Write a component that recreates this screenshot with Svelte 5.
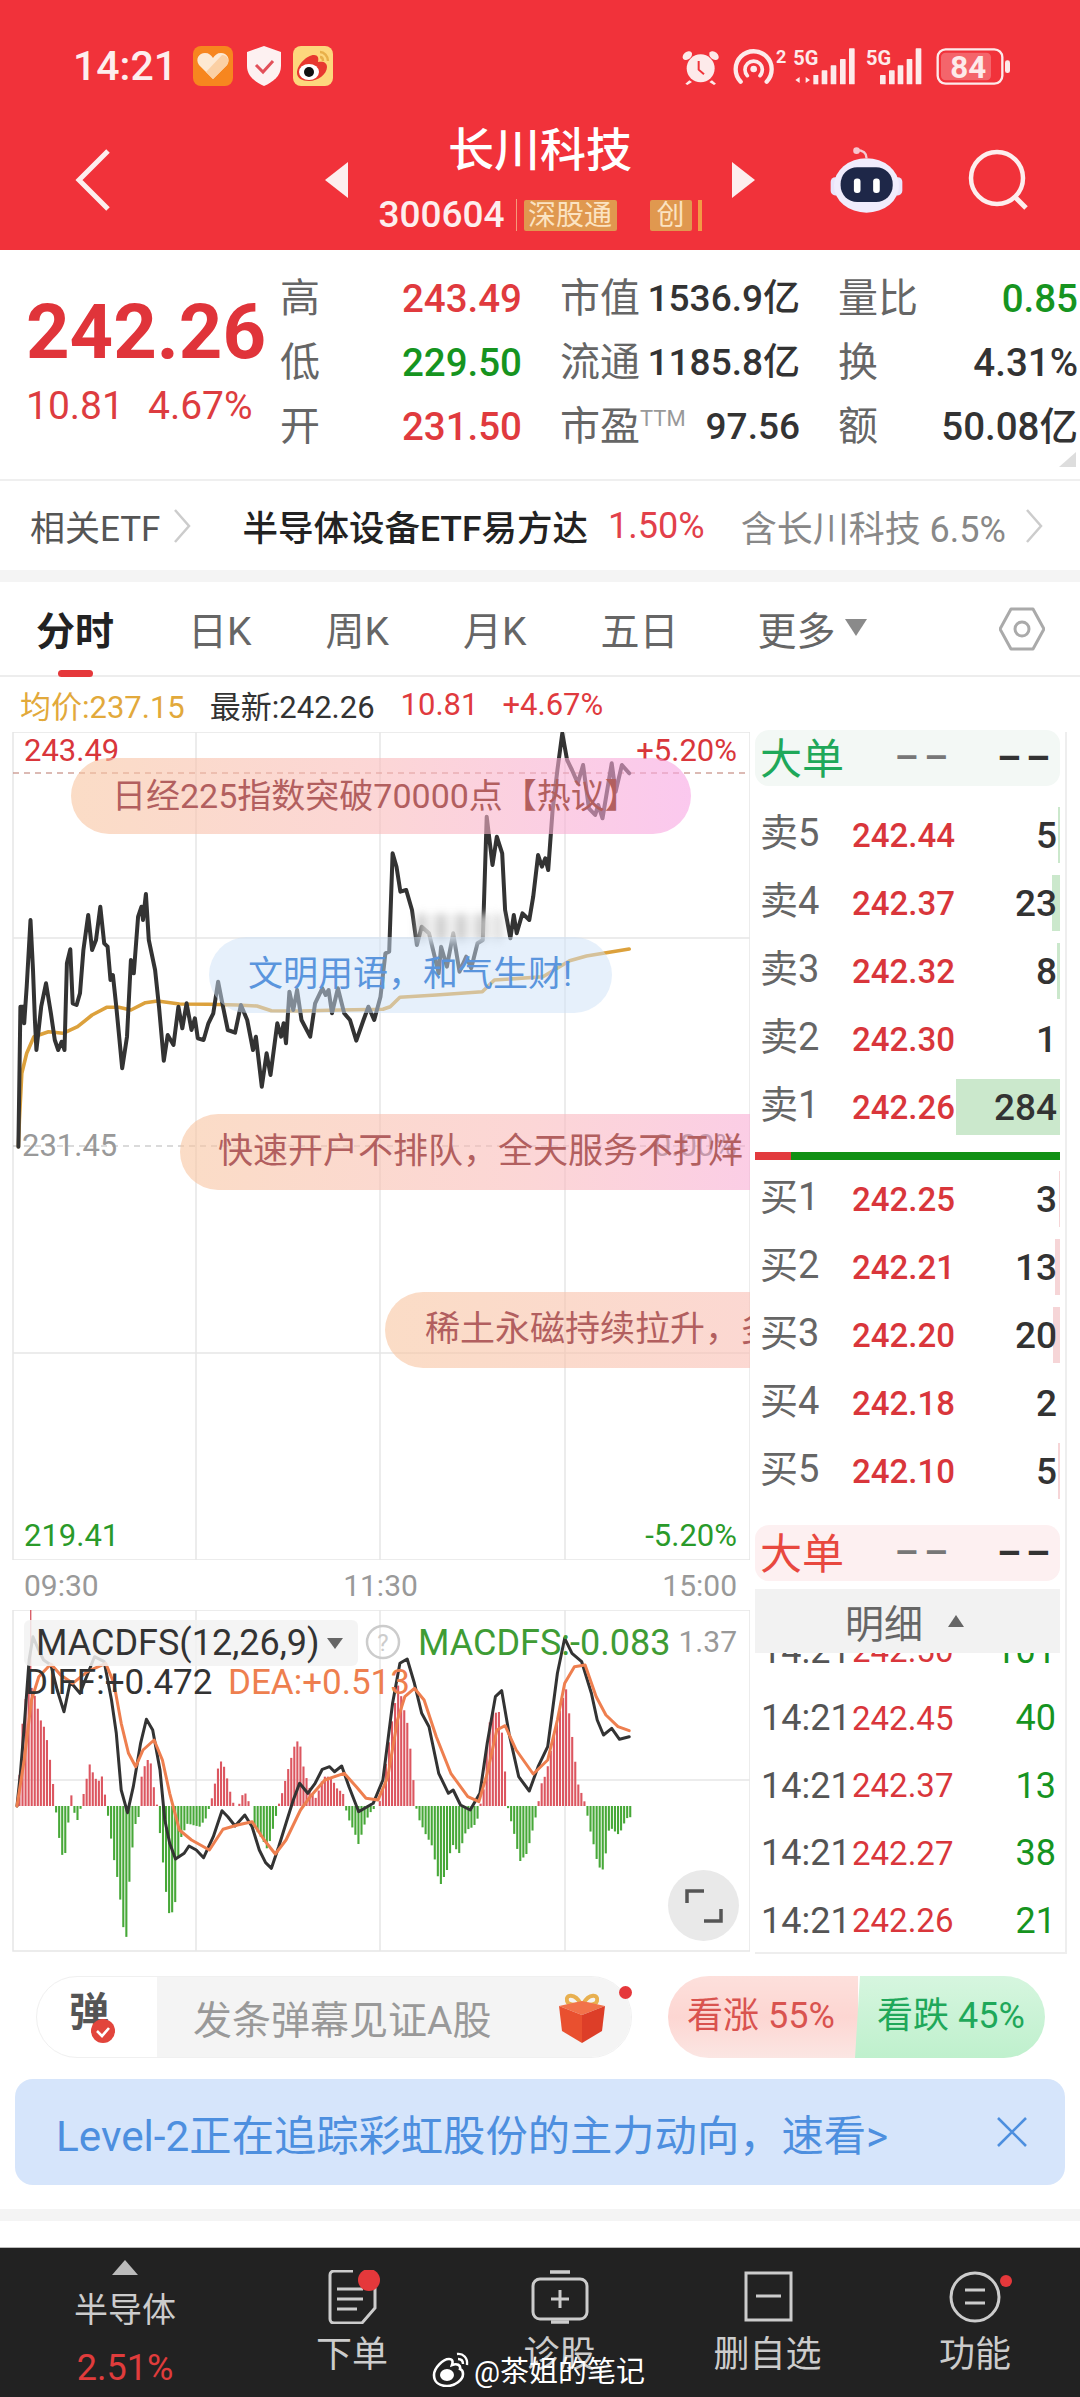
<script>
	// chart points are read off the reference in crop coordinates, mapped to pixels below
	const price = [[38,1280],[42,860],[48,860],[50,910],[55,800],[63,600],[68,750],[72,900],[75,990],[85,860],[95,790],[105,880],[113,960],[120,990],[127,965],[133,990],[138,730],[145,688],[150,850],[158,855],[165,820],[172,690],[182,585],[190,690],[198,660],[207,560],[215,670],[222,680],[228,780],[233,765],[240,860],[252,1045],[262,950],[270,720],[276,760],[285,590],[292,560],[295,600],[301,522],[307,660],[320,750],[328,860],[338,1022],[346,945],[358,975],[368,860],[376,925],[385,850],[395,930],[402,895],[408,955],[420,960],[430,910],[440,880],[450,785],[460,860],[470,930],[485,938],[497,855],[510,900],[522,990],[528,950],[540,1100],[550,1000],[558,1065],[572,910],[580,950],[585,910],[590,970],[597,815],[605,870],[613,810],[622,900],[640,950],[650,850],[665,805],[672,825],[678,810],[685,880],[697,805],[710,880],[722,900],[735,962],[750,900],[760,860],[772,900],[785,830],[795,700],[803,695],[810,400],[818,440],[826,515],[838,510],[850,570],[860,675],[870,620],[885,640],[905,760],[910,680],[922,740],[935,640],[948,755],[962,710],[972,745],[985,670],[996,660],[1004,290],[1016,435],[1025,350],[1036,400],[1042,570],[1053,655],[1060,585],[1066,640],[1078,580],[1092,600],[1100,530],[1110,405],[1118,440],[1125,415],[1131,450],[1140,270],[1150,150],[1160,40],[1170,120],[1180,150],[1192,190],[1203,135],[1215,265],[1228,285],[1234,255],[1243,295],[1262,130],[1270,215],[1283,135],[1298,160]];
	const avg = [[38,1280],[40,1200],[45,1060],[55,1000],[70,950],[100,935],[130,940],[160,920],[190,885],[220,862],[245,862],[270,870],[300,848],[325,843],[370,852],[430,853],[490,855],[530,858],[560,872],[620,873],[700,870],[790,868],[805,860],[825,832],[900,825],[995,815],[1020,780],[1120,770],[1175,722],[1210,708],[1298,687]];
	const diff = [[35,738],[42,640],[50,500],[60,300],[68,230],[78,265],[90,300],[105,315],[118,390],[132,455],[145,365],[165,400],[195,290],[215,305],[230,420],[240,520],[250,690],[263,758],[275,680],[290,550],[302,478],[315,510],[330,630],[340,780],[350,850],[362,897],[380,880],[390,858],[405,870],[420,893],[440,830],[458,752],[470,770],[485,798],[505,765],[520,800],[535,870],[548,908],[560,925],[575,860],[590,790],[605,720],[618,670],[635,700],[650,670],[665,628],[680,620],[690,635],[705,618],[720,680],[740,755],[770,730],[790,660],[810,430],[825,310],[840,297],[855,370],[870,460],[885,500],[905,640],[925,700],[935,690],[950,735],[970,750],[990,700],[1005,550],[1022,410],[1035,392],[1050,520],[1070,650],[1092,693],[1110,620],[1130,560],[1150,340],[1165,235],[1180,280],[1200,305],[1220,400],[1232,480],[1245,525],[1262,505],[1278,538],[1298,530]];
	const dea = [[35,738],[50,600],[65,420],[80,350],[105,312],[125,345],[150,370],[180,335],[218,310],[235,370],[250,490],[265,580],[280,620],[295,570],[318,540],[335,600],[350,700],[370,810],[395,840],[432,870],[460,808],[490,795],[520,785],[545,840],[568,882],[590,840],[620,750],[640,710],[670,660],[710,640],[735,680],[755,715],[780,720],[800,650],[820,480],[835,410],[855,385],[875,420],[900,530],[930,640],[965,710],[988,725],[1005,640],[1025,510],[1042,497],[1065,570],[1100,642],[1130,600],[1150,480],[1165,370],[1185,320],[1207,315],[1230,410],[1250,465],[1275,500],[1298,512]];
	const envelope = [[35,738],[42,520],[50,420],[58,380],[65,385],[72,420],[80,475],[90,505],[98,565],[108,680],[112,738],[120,835],[130,915],[138,800],[142,738],[145,705],[148,738],[155,780],[160,780],[165,738],[175,670],[182,610],[190,640],[200,670],[207,640],[214,700],[218,738],[232,890],[242,970],[250,1070],[257,1170],[265,960],[275,800],[284,770],[287,738],[290,650],[300,600],[308,600],[315,680],[322,738],[335,920],[345,1060],[358,1055],[365,900],[372,830],[385,790],[395,795],[410,800],[425,770],[430,738],[437,705],[445,640],[452,600],[462,625],[470,680],[478,725],[482,738],[490,738],[498,705],[505,700],[512,730],[518,738],[522,800],[540,840],[550,870],[562,800],[572,738],[578,710],[590,640],[605,560],[615,535],[625,630],[640,700],[650,715],[665,650],[680,650],[695,690],[705,695],[710,738],[715,770],[730,820],[738,855],[748,800],[760,760],[775,738],[785,715],[795,600],[808,470],[820,370],[830,440],[840,500],[850,650],[856,738],[860,770],[875,820],[890,860],[905,980],[920,930],[930,850],[945,880],[960,810],[975,800],[985,770],[988,738],[995,700],[1005,500],[1015,460],[1030,455],[1040,640],[1045,738],[1050,770],[1060,830],[1070,905],[1085,880],[1100,790],[1108,738],[1112,680],[1125,640],[1140,530],[1155,440],[1165,380],[1172,460],[1180,550],[1190,670],[1200,710],[1207,738],[1212,790],[1222,850],[1232,920],[1243,930],[1255,800],[1275,825],[1290,775],[1302,770]];

	const SX = 2.063;
	const line = (pts, oy) => pts.map(([x, y]) => `${(x / SX).toFixed(1)},${(y / 3 + oy).toFixed(1)}`).join(' ');

	function envelopeAt(x) {
		for (let i = 1; i < envelope.length; i++) {
			const [x0, y0] = envelope[i - 1];
			const [x1, y1] = envelope[i];
			if (x <= x1) return y0 + ((y1 - y0) * (x - x0)) / (x1 - x0);
		}
		return 738;
	}

	const bars = [];
	for (let x = 38; x < 1302; x += 6.3) {
		const y = envelopeAt(x);
		if (Math.abs(y - 738) > 2) bars.push({ x: x / SX, top: Math.min(y, 738) / 3 - 50, h: Math.abs(y - 738) / 3, up: y < 738 });
	}

	const sells = [
		{ label: '卖5', price: '242.44', qty: '5', bar: 2 },
		{ label: '卖4', price: '242.37', qty: '23', bar: 8 },
		{ label: '卖3', price: '242.32', qty: '8', bar: 3 },
		{ label: '卖2', price: '242.30', qty: '1', bar: 0 },
		{ label: '卖1', price: '242.26', qty: '284', bar: 104 }
	];
	const buys = [
		{ label: '买1', price: '242.25', qty: '3', bar: 1 },
		{ label: '买2', price: '242.21', qty: '13', bar: 5 },
		{ label: '买3', price: '242.20', qty: '20', bar: 7 },
		{ label: '买4', price: '242.18', qty: '2', bar: 0 },
		{ label: '买5', price: '242.10', qty: '5', bar: 2 }
	];
	const ticks = [
		['14:21', '242.50', '101'],
		['14:21', '242.45', '40'],
		['14:21', '242.37', '13'],
		['14:21', '242.27', '38'],
		['14:21', '242.26', '21']
	];
	const stats = [
		{ label: '高', value: '243.49', tone: 'red' },
		{ label: '市值', value: '1536.9亿', tone: 'narrow' },
		{ label: '量比', value: '0.85', tone: 'green' },
		{ label: '低', value: '229.50', tone: 'green' },
		{ label: '流通', value: '1185.8亿', tone: 'narrow' },
		{ label: '换', value: '4.31%' },
		{ label: '开', value: '231.50', tone: 'red' },
		{ label: '市盈', sup: 'TTM', value: '97.56', tone: 'narrow' },
		{ label: '额', value: '50.08亿' }
	];
	const tabs = ['日K', '周K', '月K', '五日'];
</script>

<div class="page">
	<header class="top">
		<div class="status">
			<span class="clock">14:21</span>
			<svg class="app-icon" width="40" height="40" viewBox="0 0 40 40">
				<rect width="40" height="40" rx="8" fill="#f7861f" />
				<path d="M20 33 6 19c-4-6 0-12 6-12 4 0 6 2 8 5 2-3 4-5 8-5 6 0 10 6 6 12z" fill="#fde9d3" />
				<path d="M20 33 13 26 29 9c6 0 8 6 5 10z" fill="#fbd0a4" />
			</svg>
			<svg class="shield" width="36" height="40" viewBox="0 0 36 40">
				<path d="M18 0 35 6v14c0 10-8 16-17 20C9 36 1 30 1 20V6z" fill="#fdf1f1" />
				<path d="M10 19l7 7 10-11" fill="none" stroke="#e2505a" stroke-width="3" />
			</svg>
			<svg class="app-icon" width="40" height="40" viewBox="0 0 40 40">
				<rect width="40" height="40" rx="8" fill="#fdd77d" />
				<path d="M4 27c0-8 10-18 17-18 4 0 5 3 4 7 6-1 9 1 9 5 0 7-9 14-18 14-7 0-12-3-12-8z" fill="#e8372f" />
				<ellipse cx="16" cy="26" rx="10" ry="8" fill="#fff" />
				<circle cx="16" cy="26" r="5" fill="#111" />
				<path d="M27 6c4 0 8 4 8 9M27 11c2 0 3 2 3 4" fill="none" stroke="#e8b04a" stroke-width="2.4" />
			</svg>
			<svg class="sys" width="360" height="70" viewBox="0 0 1080 210">
				<g fill="#fdeaea">
					<circle cx="92" cy="112" r="42" />
					<ellipse cx="52" cy="74" rx="16" ry="11" transform="rotate(-40 52 74)" />
					<ellipse cx="132" cy="74" rx="16" ry="11" transform="rotate(40 132 74)" />
					<path d="M58 148l-12 10 6 4 14-9zM126 148l12 10-6 4-14-9z" />
				</g>
				<path d="M86 90v26l16 14" fill="none" stroke="#f0333a" stroke-width="6" />
				<g fill="none" stroke="#fdeaea" stroke-width="13" stroke-linecap="round">
					<path d="M212 152a54 54 0 1 1 78 0" />
					<path d="M232 134a26 26 0 1 1 38 0" stroke-width="11" />
				</g>
				<circle cx="251" cy="114" r="10" fill="#fdeaea" />
				<text class="sys-num" x="318" y="97" font-size="54">2</text>
				<text class="sys-num" x="370" y="102" font-size="60">5G</text>
				<g fill="#fdeaea">
					<path d="M376 147l13-9v18zM420 147l-13-9v18z" />
					<rect x="430" y="132" width="15" height="28" />
					<rect x="455" y="118" width="17" height="42" rx="2" />
					<rect x="482" y="103" width="17" height="57" rx="2" />
					<rect x="510" y="84" width="17" height="76" rx="2" />
					<rect x="537" y="52" width="17" height="108" rx="2" />
				</g>
				<text class="sys-num" x="588" y="102" font-size="60">5G</text>
				<g fill="#fdeaea">
					<rect x="630" y="132" width="17" height="28" rx="2" />
					<rect x="657" y="118" width="17" height="42" rx="2" />
					<rect x="683" y="103" width="17" height="57" rx="2" />
					<rect x="710" y="84" width="17" height="76" rx="2" />
					<rect x="737" y="52" width="17" height="108" rx="2" />
				</g>
				<rect x="803" y="55" width="194" height="103" rx="24" fill="none" stroke="#fdeaea" stroke-width="7" />
				<rect x="813" y="65" width="150" height="83" rx="14" fill="#fff" fill-opacity="0.25" />
				<text class="sys-num" x="895" y="141" font-size="94" text-anchor="middle">84</text>
				<rect x="1005" y="88" width="15" height="38" rx="7" fill="#fdeaea" />
			</svg>
		</div>
		<div class="nav">
			<svg class="back" width="36" height="62" viewBox="0 0 36 62">
				<path d="M33 2 4 31l29 29" fill="none" stroke="#fdeeee" stroke-width="5" />
			</svg>
			<div class="switcher">
				<span class="tri-left"></span>
				<div class="title-block">
					<div class="title">长川科技</div>
					<div class="code-row">
						<span class="code">300604</span>
						<span class="tag">深股通</span>
						<span class="tag tag-small">创</span>
						<span class="tag-edge"></span>
					</div>
				</div>
				<span class="tri-right"></span>
			</div>
			<svg class="robot" width="73" height="67" viewBox="55 40 220 200">
				<path d="M165 72c0-14-10-24-30-24" fill="none" stroke="#f4c9d2" stroke-width="7" />
				<circle cx="135" cy="50" r="10" fill="#f7c6cf" />
				<rect x="57" y="130" width="30" height="55" rx="14" fill="#e9e4fa" />
				<rect x="243" y="130" width="30" height="55" rx="14" fill="#e9e4fa" />
				<ellipse cx="165" cy="155" rx="98" ry="82" fill="#f0ecfc" />
				<rect x="87" y="100" width="157" height="105" rx="50" fill="#1e2748" />
				<rect x="127" y="134" width="20" height="44" rx="9" fill="#fff" />
				<rect x="185" y="134" width="20" height="44" rx="9" fill="#fff" />
			</svg>
			<svg class="search" width="62" height="62" viewBox="0 0 62 62">
				<circle cx="29" cy="29" r="26" fill="none" stroke="#fdeeee" stroke-width="4.5" />
				<path d="M46 47l12 12" stroke="#fdeeee" stroke-width="5" />
			</svg>
		</div>
	</header>

	<section class="quote">
		<div class="quote-main">
			<div class="last">242.26</div>
			<div class="change"><span>10.81</span><span>4.67%</span></div>
		</div>
		<div class="stats">
			{#each stats as s}
				<div class="stat">
					<span class="stat-label">{s.label}{#if s.sup}<sup>{s.sup}</sup>{/if}</span>
					<span class="stat-value {s.tone ?? ''}">{s.value}</span>
				</div>
			{/each}
		</div>
		<span class="corner"></span>
	</section>

	<section class="etf">
		<span class="etf-label">相关ETF</span>
		<svg class="chev" width="20" height="34" viewBox="0 0 20 34"><path d="M3 1l14 16L3 33" fill="none" stroke="#ccc" stroke-width="2.5" /></svg>
		<span class="etf-name">半导体设备ETF易方达</span>
		<span class="etf-pct">1.50%</span>
		<span class="etf-hold">含长川科技 6.5%</span>
		<svg class="chev" width="20" height="34" viewBox="0 0 20 34"><path d="M3 1l14 16L3 33" fill="none" stroke="#ccc" stroke-width="2.5" /></svg>
	</section>

	<div class="band"></div>

	<nav class="tabs">
		<span class="tab active">分时</span>
		{#each tabs as t}
			<span class="tab">{t}</span>
		{/each}
		<span class="tab more">更多<i></i></span>
		<svg class="hex" width="46" height="46" viewBox="0 0 46 46">
			<path d="M12 3h22l11 20-11 20H12L1 23z" fill="none" stroke="#aaa" stroke-width="3" stroke-linejoin="round" />
			<circle cx="23" cy="23" r="7" fill="none" stroke="#aaa" stroke-width="3" />
		</svg>
	</nav>

	<div class="legend">
		<span class="avg-text">均价:237.15</span>
		<span class="latest">最新:242.26</span>
		<span class="red">10.81</span>
		<span class="red">+4.67%</span>
	</div>

	<section class="market">
		<div class="charts">
			<div class="main-chart">
				<svg width="750" height="828" viewBox="0 0 750 828">
					<g stroke="#e6e6e6" stroke-width="1.5" fill="none">
						<rect x="13" y="0" width="737" height="828" />
						<path d="M196 0v828M380 0v828M565 0v828M13 206h737M13 621h737" />
					</g>
					<path d="M13 41h737" stroke="#b9776b" stroke-width="1.2" stroke-dasharray="6 5" />
					<path d="M13 414h737" stroke="#b5b5b5" stroke-width="1.2" stroke-dasharray="6 5" />
					<polyline points={line(avg, -12)} class="line" stroke="#dca13c" stroke-width="3.6" />
					<polyline points={line(price, -12)} class="line" stroke="#333" stroke-width="4" />
					<text class="axis red-fill" x="24" y="29">243.49</text>
					<text class="axis red-fill" x="737" y="29" text-anchor="end">+5.20%</text>
					<text class="axis gray-fill" x="22" y="424">231.45</text>
					<text class="axis zero-fill" x="737" y="424" text-anchor="end">0.00%</text>
					<text class="axis green-fill" x="24" y="814">219.41</text>
					<text class="axis green-fill" x="737" y="814" text-anchor="end">-5.20%</text>
				</svg>
				<div class="mosaic"></div>
				<div class="danmu danmu-hot">日经225指数突破70000点【热议】</div>
				<div class="danmu danmu-blue">文明用语，和气生财!</div>
				<div class="danmu danmu-open">快速开户不排队，全天服务不打烊</div>
				<div class="danmu danmu-earth">稀土永磁持续拉升，多</div>
			</div>
			<div class="time-axis"><span>09:30</span><span>11:30</span><span>15:00</span></div>
			<div class="macd">
				<svg width="750" height="342" viewBox="0 0 750 342">
					<g stroke="#e6e6e6" stroke-width="1.5" fill="none">
						<rect x="13" y="0" width="737" height="341" />
						<path d="M196 0v341M380 0v341M565 0v341M13 170h737" />
					</g>
					{#each bars as b}
						<rect x={b.x} y={b.top} width="2.1" height={b.h} fill={b.up ? '#dc5660' : '#47a838'} />
					{/each}
					<rect x="30" y="0" width="1.4" height="60" fill="#d9606a" />
					<polyline points={line(diff, -50)} class="line" stroke="#333" stroke-width="3" />
					<polyline points={line(dea, -50)} class="line" stroke="#ee7f4f" stroke-width="3" />
					<rect x="24" y="10" width="334" height="46" rx="6" fill="#f2f2f2" fill-opacity="0.85" />
					<text class="macd-head" x="36" y="45" fill="#333">MACDFS(12,26,9)</text>
					<path d="M327 28h16l-8 11z" fill="#666" />
					<circle cx="383" cy="32" r="16" fill="none" stroke="#ccc" stroke-width="2.5" />
					<text class="help" x="383" y="41" text-anchor="middle">?</text>
					<text class="macd-head" x="418" y="45" fill="#3f9c35">MACDFS:-0.083</text>
					<text class="macd-small" x="737" y="42" fill="#999" text-anchor="end">1.37</text>
					<text class="macd-text" x="25" y="84" fill="#333">DIFF:+0.472</text>
					<text class="macd-text" x="228" y="84" fill="#ee7f4f">DEA:+0.513</text>
				</svg>
				<button class="expand" aria-label="全屏">
					<svg width="40" height="36" viewBox="0 0 40 36">
						<path d="M3 15V3h17M37 21v12H20" fill="none" stroke="#555" stroke-width="3.5" />
					</svg>
				</button>
			</div>
		</div>

		<aside class="book">
			<div class="big-order green-pill"><b>大单</b><span>––</span><span class="dark">––</span></div>
			<div class="levels">
				{#each sells as l}
					<div class="level">
						<i class="vol vol-sell" style="width:{l.bar}px"></i>
						<span class="lv-label">{l.label}</span>
						<span class="lv-price">{l.price}</span>
						<span class="lv-qty">{l.qty}</span>
					</div>
				{/each}
			</div>
			<div class="ratio"><i></i></div>
			<div class="levels">
				{#each buys as l}
					<div class="level">
						<i class="vol vol-buy" style="width:{l.bar}px"></i>
						<span class="lv-label">{l.label}</span>
						<span class="lv-price">{l.price}</span>
						<span class="lv-qty">{l.qty}</span>
					</div>
				{/each}
			</div>
			<div class="big-order red-pill"><b>大单</b><span>––</span><span class="dark">––</span></div>
			<div class="detail-head">明细<i></i></div>
			<div class="ticks">
				<div class="ticks-inner">
					{#each ticks as t}
						<div class="tick"><span class="t-time">{t[0]}</span><span class="t-price">{t[1]}</span><span class="t-qty">{t[2]}</span></div>
					{/each}
				</div>
			</div>
		</aside>
	</section>

	<section class="actions">
		<div class="comment">
			<div class="comment-mark">弹<i>
				<svg width="24" height="24" viewBox="0 0 24 24"><circle cx="12" cy="12" r="12" fill="#e2453c" /><path d="M6 12l5 5 7-8" fill="none" stroke="#fff" stroke-width="2.6" /></svg>
			</i></div>
			<div class="comment-input">
				<span>发条弹幕见证A股</span>
				<svg width="50" height="52" viewBox="0 0 50 52">
					<path d="M24 13C18 2 8 3 10 10c1 4 8 4 14 3zM26 13C32 2 42 3 40 10c-1 4-8 4-14 3z" fill="none" stroke="#e8b050" stroke-width="4" />
					<path d="M2 15 25 10l23 5-23 9z" fill="#f2724a" />
					<path d="M2 15l23 9v28L5 40z" fill="#e9502f" />
					<path d="M48 15 25 24v28l20-12z" fill="#dd3e28" />
				</svg>
			</div>
			<span class="dot"></span>
		</div>
		<div class="vote">
			<div class="vote-up">看涨 55%</div>
			<div class="vote-down">看跌 45%</div>
		</div>
	</section>

	<div class="banner">
		<span>Level-2正在追踪彩虹股份的主力动向，速看&gt;</span>
		<svg width="30" height="30" viewBox="0 0 30 30"><path d="M1 1l28 28M29 1 1 29" stroke="#4d8fdf" stroke-width="2.6" /></svg>
	</div>

	<div class="band band-low"></div>

	<footer class="bottom">
		<div class="b-item sector">
			<i class="sector-tri"></i>
			<span class="sector-name">半导体</span>
			<span class="sector-pct">2.51%</span>
		</div>
		<div class="b-item">
			<svg width="60" height="54" viewBox="0 0 60 54">
				<path d="M31 1H12a4 4 0 0 0-4 4v44a4 4 0 0 0 4 4h28l13-15V18" fill="none" stroke="#ccc" stroke-width="3" />
				<path d="M15 19h26M15 29h26M15 39h20" stroke="#ccc" stroke-width="3" />
				<circle cx="47" cy="10" r="11" fill="#e5383b" />
			</svg>
			<span>下单</span>
		</div>
		<div class="b-item">
			<svg width="60" height="54" viewBox="0 0 60 54">
				<path d="M20 2h20M21 52h18" stroke="#ccc" stroke-width="3.5" />
				<rect x="3" y="9" width="54" height="40" rx="7" fill="none" stroke="#ccc" stroke-width="3" />
				<path d="M30 20v18M21 29h18" stroke="#ccc" stroke-width="3" />
			</svg>
			<span>诊股</span>
		</div>
		<div class="b-item">
			<svg width="60" height="54" viewBox="0 0 60 54">
				<rect x="8" y="3" width="45" height="47" fill="none" stroke="#ccc" stroke-width="3" />
				<path d="M18 26h25" stroke="#ccc" stroke-width="3" />
			</svg>
			<span>删自选</span>
		</div>
		<div class="b-item">
			<svg width="74" height="54" viewBox="0 0 74 54">
				<circle cx="37" cy="27" r="24" fill="none" stroke="#ccc" stroke-width="3" />
				<path d="M27 20h20M27 33h20" stroke="#ccc" stroke-width="3" />
				<circle cx="68" cy="11" r="6" fill="#e5383b" />
			</svg>
			<span>功能</span>
		</div>
		<div class="watermark">
			<svg width="38" height="36" viewBox="0 0 38 36">
				<path d="M2 24c0-7 9-16 15-16 4 0 4 3 3 6 5-2 9 0 8 4 3 1 3 3 3 5 0 6-8 12-16 12S2 31 2 24z" fill="none" stroke="#fff" stroke-width="2.6" />
				<ellipse cx="15" cy="24" rx="7" ry="6" fill="#fff" />
				<path d="M25 3c6-1 11 4 10 11M26 8c3 0 5 2 5 5" fill="none" stroke="#fff" stroke-width="2.4" />
			</svg>
			<span>@茶姐的笔记</span>
		</div>
	</footer>
</div>

<style>
	:global(body) {
		margin: 0;
		background: #fff;
	}

	.page {
		width: 1080px;
		height: 2397px;
		display: flex;
		flex-direction: column;
		overflow: hidden;
		background: #fff;
		font-family: Roboto, "Noto Sans CJK SC", sans-serif;
		color: #333;
	}

	.red { color: #e03a3e; }
	.green { color: #16941f; }

	/* header */
	.top {
		height: 250px;
		background: #f1323a;
		color: #fdeeee;
		flex-shrink: 0;
	}

	.status {
		height: 88px;
		padding: 22px 50px 0 73px;
		box-sizing: content-box;
		display: flex;
		align-items: center;
	}

	.clock {
		font-size: 41px;
		font-weight: 500;
		width: 120px;
	}

	.shield {
		margin: 0 11px 0 13px;
	}

	.sys {
		margin-left: auto;
	}

	.sys-num {
		fill: #fdeaea;
		font-family: Roboto, sans-serif;
		font-weight: 700;
	}

	.nav {
		height: 140px;
		padding-left: 75px;
		display: flex;
		align-items: center;
	}

	.back {
		flex-shrink: 0;
	}

	.switcher {
		width: 430px;
		height: 140px;
		margin-left: 214px;
		display: flex;
		align-items: center;
		justify-content: space-between;
	}

	.tri-left,
	.tri-right {
		width: 0;
		height: 0;
		border-top: 18px solid transparent;
		border-bottom: 18px solid transparent;
	}

	.tri-left { border-right: 23px solid #fdeeee; }
	.tri-right { border-left: 23px solid #fdeeee; }

	.title-block {
		align-self: flex-start;
		padding-top: 15px;
		text-align: center;
	}

	.title {
		font-size: 46px;
		line-height: 50px;
		font-weight: 500;
		color: #fff;
	}

	.code-row {
		margin-top: 24px;
		display: flex;
		align-items: center;
		height: 32px;
	}

	.code {
		font-size: 37px;
		font-weight: 500;
		padding-right: 11px;
		border-right: 1px solid #f59a7a;
		line-height: 32px;
	}

	.tag {
		margin-left: 7px;
		width: 93px;
		height: 31px;
		line-height: 31px;
		background: #e0984f;
		color: #fbe3c2;
		font-size: 28px;
		text-align: center;
		border-radius: 2px;
	}

	.tag-small {
		margin-left: 33px;
		width: 42px;
	}

	.tag-edge {
		margin-left: 6px;
		width: 4px;
		height: 31px;
		background: #f29a45;
	}

	.robot {
		margin-left: 75px;
		flex-shrink: 0;
	}

	.search {
		margin-left: 65px;
		flex-shrink: 0;
	}

	/* quote */
	.quote {
		position: relative;
		height: 231px;
		display: flex;
		border-bottom: 2px solid #efefef;
		box-sizing: border-box;
		flex-shrink: 0;
	}

	.quote-main {
		width: 280px;
		padding-left: 26px;
		box-sizing: border-box;
		color: #e0343a;
	}

	.last {
		margin-top: 36px;
		font-size: 76px;
		line-height: 92px;
		font-weight: 700;
	}

	.change {
		margin-top: 5px;
		display: flex;
		gap: 24px;
		font-size: 39px;
		line-height: 46px;
		color: #dd3c40;
	}

	.stats {
		flex: 1;
		padding-top: 17px;
		display: grid;
		grid-template-columns: 242px 240px 240px;
		grid-auto-rows: 64px;
		column-gap: 38px;
		align-items: center;
	}

	.stat {
		display: flex;
		justify-content: space-between;
		align-items: center;
		white-space: nowrap;
	}

	.stat-label {
		font-size: 40px;
		color: #666;
		line-height: 46px;
	}

	.stat-label sup {
		font-size: 22px;
		color: #999;
		vertical-align: 14px;
		line-height: 0;
	}

	.stat-value {
		font-size: 38.5px;
		line-height: 46px;
		font-weight: 500;
	}

	.stat-value.narrow { font-size: 37px; }
	.stat-value.red { color: #e03a3e; }
	.stat-value.green { color: #16941f; }

	.corner {
		position: absolute;
		right: 4px;
		bottom: 12px;
		border-left: 17px solid transparent;
		border-bottom: 15px solid #ddd;
	}

	/* etf strip */
	.etf {
		height: 89px;
		padding-left: 30px;
		display: flex;
		align-items: center;
		font-size: 35px;
		white-space: nowrap;
		flex-shrink: 0;
	}

	.etf-label { color: #555; }
	.etf-name {
		margin-left: 50px;
		color: #222;
		font-size: 35.5px;
		font-weight: 500;
	}
	.etf-pct {
		margin-left: 20px;
		color: #e2404a;
		font-size: 36px;
	}
	.etf-hold {
		margin-left: 36px;
		margin-right: 6px;
		color: #888;
		font-size: 36px;
	}
	.chev { margin-left: 12px; }

	.band {
		height: 12px;
		background: #f4f4f4;
		flex-shrink: 0;
	}

	/* tabs */
	.tabs {
		position: relative;
		height: 95px;
		padding-left: 36px;
		display: flex;
		align-items: center;
		gap: 74px;
		border-bottom: 2px solid #ededed;
		box-sizing: border-box;
		flex-shrink: 0;
	}

	.tab {
		font-size: 39px;
		color: #666;
		white-space: nowrap;
		margin-top: -2px;
	}

	.tab.active {
		position: relative;
		color: #222;
		font-weight: 700;
	}

	.tab.active::after {
		content: "";
		position: absolute;
		left: 22px;
		bottom: -21px;
		width: 35px;
		height: 7px;
		border-radius: 4px;
		background: #e5383b;
	}

	.more {
		margin-left: 5px;
		display: flex;
		align-items: center;
	}

	.more i {
		margin-left: 9px;
		border-left: 11px solid transparent;
		border-right: 11px solid transparent;
		border-top: 17px solid #8a8a8a;
	}

	.hex {
		margin-left: auto;
		margin-right: 35px;
	}

	.legend {
		height: 55px;
		padding-left: 20px;
		display: flex;
		align-items: center;
		font-size: 31px;
		white-space: nowrap;
		flex-shrink: 0;
	}

	.avg-text { color: #e2a93b; }
	.latest { margin: 0 26px 0 25px; }
	.legend .red + .red { margin-left: 24px; }

	/* charts */
	.market {
		display: flex;
		height: 1223px;
		flex-shrink: 0;
	}

	.charts {
		width: 750px;
		flex-shrink: 0;
	}

	.main-chart {
		position: relative;
		height: 828px;
		overflow: hidden;
	}

	svg {
		display: block;
	}

	.line {
		fill: none;
		stroke-linejoin: round;
		stroke-linecap: round;
	}

	.axis {
		font-family: Roboto, sans-serif;
		font-size: 31px;
	}

	.red-fill { fill: #d9363b; }
	.gray-fill { fill: #999; }
	.zero-fill { fill: #777; }
	.green-fill { fill: #2a9a2a; }

	.mosaic {
		position: absolute;
		left: 417px;
		top: 182px;
		width: 84px;
		height: 28px;
		background: repeating-linear-gradient(90deg, #bbb 0 8px, #eee 8px 20px);
		filter: blur(4px);
		opacity: 0.8;
	}

	.danmu {
		position: absolute;
		font-size: 35px;
		line-height: 76px;
		height: 76px;
		border-radius: 38px;
		box-sizing: border-box;
		white-space: nowrap;
	}

	.danmu-hot {
		left: 71px;
		top: 26px;
		width: 620px;
		padding-left: 41px;
		font-size: 34px;
		color: #b25f5f;
		background: linear-gradient(90deg, rgba(248, 197, 160, 0.6), rgba(250, 187, 187, 0.6) 50%, rgba(248, 164, 227, 0.6));
	}

	.danmu-blue {
		left: 209px;
		top: 205px;
		width: 403px;
		padding-left: 39px;
		color: #5a95dd;
		background: rgba(205, 225, 247, 0.5);
	}

	.danmu-open {
		left: 180px;
		top: 382px;
		width: 700px;
		padding-left: 38px;
		color: #b25f5f;
		background: linear-gradient(90deg, rgba(248, 197, 160, 0.6), rgba(250, 187, 187, 0.6) 50%, rgba(248, 164, 227, 0.6));
	}

	.danmu-earth {
		left: 385px;
		top: 560px;
		width: 500px;
		padding-left: 40px;
		color: #b25f5f;
		background: linear-gradient(90deg, rgba(248, 197, 160, 0.6), rgba(250, 187, 187, 0.6));
	}

	.time-axis {
		height: 50px;
		padding: 0 13px 0 24px;
		display: flex;
		justify-content: space-between;
		align-items: center;
		font-size: 30px;
		color: #999;
	}

	.macd {
		position: relative;
		height: 345px;
	}

	.macd-text {
		font-family: Roboto, sans-serif;
		font-size: 35px;
	}

	.macd-head {
		font-family: Roboto, sans-serif;
		font-size: 36px;
	}

	.macd-small {
		font-family: Roboto, sans-serif;
		font-size: 30px;
	}

	.help {
		font-size: 24px;
		fill: #ccc;
		font-family: Roboto, sans-serif;
	}

	.expand {
		position: absolute;
		left: 668px;
		top: 260px;
		width: 71px;
		height: 71px;
		padding: 0;
		border: 0;
		border-radius: 50%;
		background: #e9e9e9;
		display: flex;
		align-items: center;
		justify-content: center;
	}

	/* order book */
	.book {
		position: relative;
		margin-left: 5px;
		width: 312px;
		height: 1222px;
		padding-right: 5px;
		border-right: 2px solid #eee;
		box-sizing: border-box;
		border-bottom: 2px solid #eee;
	}

	.big-order {
		height: 56px;
		padding: 0 5px;
		border-radius: 14px;
		display: flex;
		align-items: center;
		font-size: 38px;
		color: #777;
		margin-top: -2px;
	}

	.big-order b {
		width: 144px;
		font-size: 42px;
		font-weight: 400;
		margin-top: -5px;
	}

	.big-order span {
		width: 82px;
		letter-spacing: 5px;
		line-height: 36px;
		font-weight: 500;
		white-space: nowrap;
	}

	.big-order .dark {
		margin-left: 26px;
		color: #333;
		font-weight: 700;
		width: auto;
	}

	.green-pill {
		background: #f3f8f5;
	}

	.green-pill b { color: #1fa85a; }

	.red-pill {
		margin-top: 20px;
		height: 56px;
		background: #fdf0f1;
	}

	.red-pill b { color: #e8483f; }

	.levels {
		padding-top: 15px;
	}

	.levels + .ratio + .levels {
		padding-top: 5px;
	}

	.level {
		position: relative;
		height: 68px;
		display: flex;
		align-items: center;
		padding: 0 3px 0 5px;
	}

	.vol {
		position: absolute;
		right: 0;
		top: 6px;
		height: 56px;
	}

	.vol-sell { background: #cbe8cc; }
	.vol-buy { background: #f6d5d7; }

	.lv-label {
		position: relative;
		width: 92px;
		margin-top: -12px;
		font-size: 38px;
		color: #666;
	}

	.lv-price {
		position: relative;
		font-size: 33px;
		color: #d9363b;
		font-weight: 500;
	}

	.lv-qty {
		position: relative;
		margin-left: auto;
		font-size: 37px;
		color: #333;
		font-weight: 500;
	}

	.ratio {
		margin-top: 11px;
		height: 8px;
		background: #119014;
	}

	.ratio i {
		display: block;
		width: 36px;
		height: 8px;
		background: #e23b3e;
	}

	.detail-head {
		position: relative;
		z-index: 1;
		margin-top: 8px;
		height: 64px;
		background: #f2f2f2;
		display: flex;
		align-items: center;
		padding-left: 90px;
		font-size: 39px;
		color: #666;
	}

	.detail-head i {
		margin-left: 25px;
		border-left: 8px solid transparent;
		border-right: 8px solid transparent;
		border-top: 0;
		border-bottom: 12px solid #666;
	}

	.ticks {
		height: 295px;
		overflow: hidden;
	}

	.ticks-inner {
		margin-top: -36px;
	}

	.tick {
		height: 67.5px;
		display: flex;
		align-items: center;
		padding: 0 4px 0 6px;
	}

	.t-time {
		width: 91px;
		font-size: 36px;
		color: #555;
	}

	.t-price {
		font-size: 33px;
		color: #d9363b;
	}

	.t-qty {
		margin-left: auto;
		font-size: 36px;
		color: #16941f;
	}

	/* comment + vote */
	.actions {
		height: 82px;
		margin-top: 21px;
		padding-left: 36px;
		display: flex;
		flex-shrink: 0;
	}

	.comment {
		position: relative;
		width: 596px;
		height: 82px;
		display: flex;
		border: 1px solid #f0f0f0;
		border-radius: 41px;
		box-sizing: border-box;
		overflow: visible;
	}

	.comment-mark {
		position: relative;
		width: 120px;
		padding-left: 32px;
		box-sizing: border-box;
		font-size: 40px;
		font-weight: 700;
		line-height: 72px;
		color: #555;
	}

	.comment-mark i {
		position: absolute;
		left: 54px;
		top: 42px;
	}

	.comment-input {
		flex: 1;
		display: flex;
		align-items: center;
		justify-content: space-between;
		padding: 0 24px 0 36px;
		background: #f4f4f4;
		border-radius: 0 40px 40px 0;
		font-size: 39px;
		color: #999;
		white-space: nowrap;
	}

	.dot {
		position: absolute;
		right: -1px;
		top: 9px;
		width: 13px;
		height: 13px;
		border-radius: 50%;
		background: #e5383b;
	}

	.vote {
		position: relative;
		margin-left: 36px;
		width: 377px;
		height: 82px;
		border-radius: 41px;
		overflow: hidden;
		display: flex;
		font-size: 36px;
		line-height: 80px;
		white-space: nowrap;
	}

	.vote-up {
		width: 190px;
		padding-left: 19px;
		box-sizing: border-box;
		background: linear-gradient(#fde0dc, #fdd6d2 50%, #fbe6e3);
		color: #d9534f;
	}

	.vote-down {
		flex: 1;
		padding-left: 22px;
		clip-path: polygon(5px 0, 100% 0, 100% 100%, 0 100%);
		margin-left: -3px;
		background: linear-gradient(#d6f6df, #bff0cd);
		color: #1fa85a;
	}

	.banner {
		margin: 21px 15px 0;
		height: 106px;
		padding: 0 38px 0 41px;
		box-sizing: border-box;
		border-radius: 18px;
		background: #d6e5fb;
		display: flex;
		align-items: center;
		justify-content: space-between;
		font-size: 42.3px;
		color: #4d8fdf;
		white-space: nowrap;
		flex-shrink: 0;
	}

	.band-low {
		margin-top: 24px;
	}

	/* bottom bar */
	.bottom {
		position: relative;
		margin-top: 26px;
		flex: 1;
		background: #222;
		border-top: 1px solid #bbb;
		display: grid;
		grid-template-columns: 250px 204px 211px 205px 210px;
		color: #ccc;
	}

	.b-item {
		padding-top: 22px;
		display: flex;
		flex-direction: column;
		align-items: center;
		font-size: 36px;
	}

	.b-item span {
		margin-top: 9px;
		line-height: 44px;
	}

	.sector {
		padding-top: 12px;
	}

	.sector-tri {
		border-left: 13px solid transparent;
		border-right: 13px solid transparent;
		border-bottom: 15px solid #bbb;
	}

	.b-item .sector-name {
		margin-top: 12px;
		font-size: 34px;
		line-height: 46px;
	}

	.b-item .sector-pct {
		margin-top: 13px;
		color: #e03c3c;
		font-size: 36px;
		line-height: 44px;
	}

	.watermark {
		position: absolute;
		left: 432px;
		top: 100px;
		display: flex;
		align-items: center;
		gap: 4px;
		font-size: 29px;
		color: #fff;
		white-space: nowrap;
	}
</style>
